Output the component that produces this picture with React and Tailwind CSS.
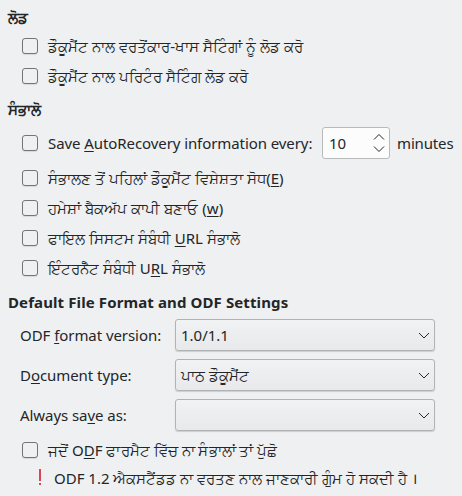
const F = "font-['Noto_Sans',sans-serif]";

function Check({ children, className }) {
  return (
    <label className={`flex items-center ${className}`}>
      <span className="ml-[22px] mr-[10px] size-4 shrink-0 rounded-[3px] border border-[#737577] bg-[#eff0f1] shadow-[0_1px_1px_rgba(0,0,0,0.1)]" />
      <span className="whitespace-nowrap">{children}</span>
    </label>
  );
}

function Combo({ label, value }) {
  return (
    <div className="flex h-10 items-center">
      <span className="ml-5 w-[155px] shrink-0 whitespace-nowrap tracking-[-0.06px]">{label}</span>
      <div className="flex h-8 w-[260px] items-center justify-between rounded-[3px] border border-[#b0b2b4] bg-gradient-to-b from-[#f1f2f3] to-[#e8e9ea] pl-[5px] pr-1 shadow-[0_1px_1px_rgba(0,0,0,0.15)]">
        <span className="whitespace-nowrap">{value}</span>
        <svg className="h-3 w-3" viewBox="0 0 12 12" fill="none" stroke="#232629"><path d="M1 4l5 5 5-5" /></svg>
      </div>
    </div>
  );
}

const U = ({ children }) => <span className="underline underline-offset-2">{children}</span>;

export default function App() {
  return (
    <div className={`h-[496px] w-[462px] overflow-hidden bg-[#eff0f1] text-[15px] leading-5 text-[#232629] ${F}`}>
      <div className="ml-2 flex h-[31px] items-center pt-0.5 font-bold">ਲੋਡ</div>
      <Check className="h-[30px] tracking-[0.03px]">ਡੌਕੂਮੈਂਟ ਨਾਲ ਵਰਤੋਂਕਾਰ-ਖਾਸ ਸੈਟਿੰਗਾਂ ਨੂੰ ਲੋਡ ਕਰੋ</Check>
      <Check className="h-[30px]">ਡੌਕੂਮੈਂਟ ਨਾਲ ਪਰਿਟੰਰ ਸੈਟਿੰਗ ਲੋਡ ਕਰੋ</Check>
      <div className="ml-2 flex h-[35px] items-center font-bold">ਸੰਭਾਲੋ</div>
      <div className="flex h-[34px] items-center">
        <Check className="w-[322px] tracking-[-0.08px]">Save <U>A</U>utoRecovery information every:</Check>
        <div className="flex h-8 w-[68px] items-center justify-between rounded-[3px] border border-[#b8babc] bg-[#fcfcfc] pl-1.5 pr-1">
          <span>10</span>
          <svg className="h-6 w-3" viewBox="0 0 12 24" fill="none" stroke="#232629"><path d="M1 8.5l5-5 5 5M1 15.5l5 5 5-5" /></svg>
        </div>
        <span className="ml-[7px] tracking-[-0.15px]">minutes</span>
      </div>
      <Check className="mt-[3px] h-[30px] tracking-[0.03px]">ਸੰਭਾਲਣ ਤੋਂ ਪਹਿਲਾਂ ਡੌਕੂਮੈਂਟ ਵਿਸ਼ੇਸ਼ਤਾ ਸੋਧ(<U>E</U>)</Check>
      <Check className="h-[30px] tracking-[0.04px]">ਹਮੇਸ਼ਾਂ ਬੈਕਅੱਪ ਕਾਪੀ ਬਣਾਓ (<U>w</U>)</Check>
      <Check className="h-[30px]">ਫਾਇਲ ਸਿਸਟਮ ਸੰਬੰਧੀ <U>U</U>RL ਸੰਭਾਲੋ</Check>
      <Check className="h-[30px]">ਇੰਟਰਨੈੱਟ ਸੰਬੰਧੀ U<U>R</U>L ਸੰਭਾਲੋ</Check>
      <div className="ml-2 flex h-8 items-center pt-1.5 font-bold tracking-[0.11px]">Default File Format and ODF Settings</div>
      <Combo label={<>ODF <U>f</U>ormat version:</>} value="1.0/1.1" />
      <Combo label={<>D<U>o</U>cument type:</>} value="ਪਾਠ ਡੌਕੂਮੈਂਟ" />
      <Combo label={<>Always sa<U>v</U>e as:</>} value="" />
      <Check className="h-[30px] tracking-[0.03px]">ਜਦੋਂ O<U>D</U>F ਫਾਰਮੈਟ ਵਿੱਚ ਨਾ ਸੰਭਾਲਾਂ ਤਾਂ ਪੁੱਛੋ</Check>
      <div className="flex h-[26px] items-center">
        <svg className="mb-0.5 ml-[36px] mr-[10px] h-4 w-2" viewBox="0 0 8 16" fill="#da4453"><path d="M3 0h2v12H3zM3 14h2v2H3z" /></svg>
        <span className="whitespace-nowrap">ODF 1.2 ਐਕਸਟੈਂਡਡ ਨਾ ਵਰਤਣ ਨਾਲ ਜਾਣਕਾਰੀ ਗੁੰਮ ਹੋ ਸਕਦੀ ਹੈ<span className="ml-[5px]">।</span></span>
      </div>
    </div>
  );
}
